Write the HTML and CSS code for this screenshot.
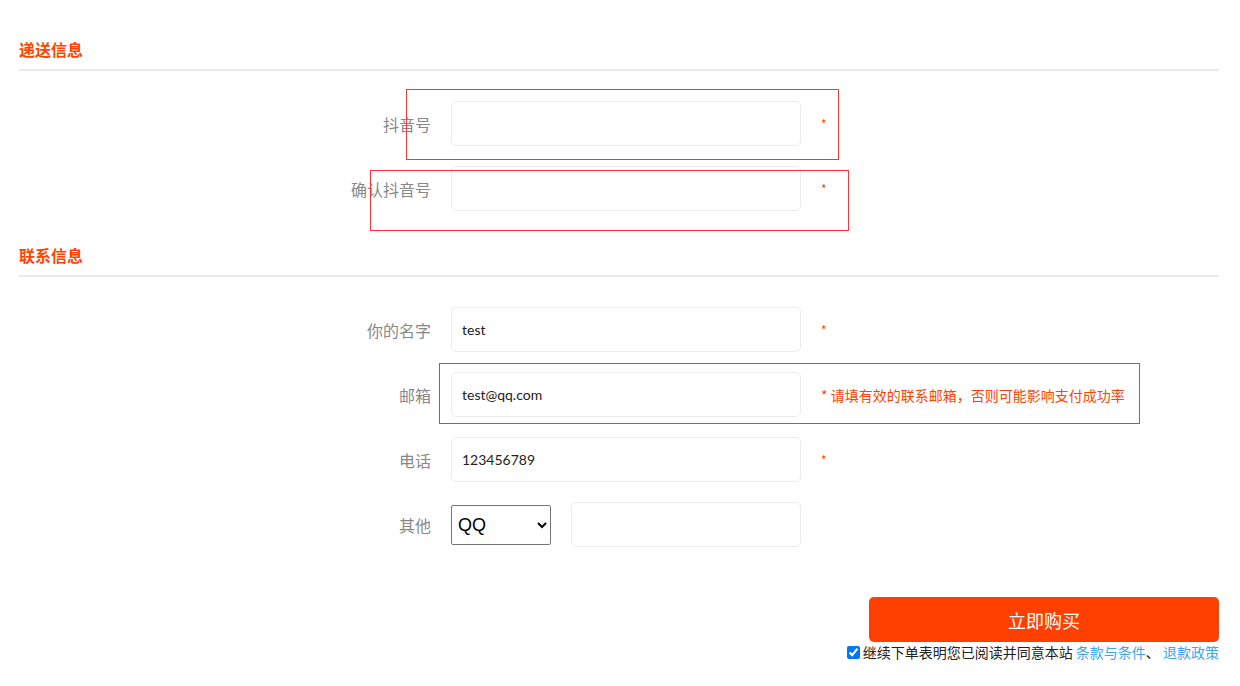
FILE: index.html
```html
<!DOCTYPE html>
<html lang="zh-CN">
<head>
    <meta charset="UTF-8">
    <meta name="viewport" content="width=device-width, initial-scale=1.0">
    <title>下单</title>
    <link rel="stylesheet" href="styles.css">
</head>
<body>
    <div class="container">
        <h2 class="section-title first">递送信息</h2>
        <div class="form-block">
            <div class="form-row">
                <span class="mark mark-1"></span>
                <label class="label">抖音号</label>
                <input class="field" type="text">
                <span class="req">*</span>
            </div>
            <div class="form-row">
                <span class="mark mark-2"></span>
                <label class="label">确认抖音号</label>
                <input class="field" type="text">
                <span class="req">*</span>
            </div>
        </div>

        <h2 class="section-title">联系信息</h2>
        <div class="form-block">
            <div class="form-row">
                <label class="label">你的名字</label>
                <input class="field" type="text" value="test">
                <span class="req">*</span>
            </div>
            <div class="form-row">
                <span class="mark mark-3"></span>
                <label class="label">邮箱</label>
                <input class="field" type="text" value="test@qq.com">
                <span class="req note">* 请填有效的联系邮箱，否则可能影响支付成功率</span>
            </div>
            <div class="form-row">
                <label class="label">电话</label>
                <input class="field" type="text" value="123456789">
                <span class="req">*</span>
            </div>
            <div class="form-row">
                <label class="label">其他</label>
                <select class="picker">
                    <option>QQ</option>
                    <option>微信</option>
                </select>
                <input class="field small" type="text">
            </div>
        </div>

        <div class="submit">
            <button class="buy-btn">立即购买</button>
            <div class="agree">
                <input type="checkbox" checked>
                <span>继续下单表明您已阅读并同意本站 <a href="#">条款与条件</a>、 <a href="#">退款政策</a></span>
            </div>
        </div>
    </div>
</body>
</html>
```

FILE: styles.css
```css
body { margin: 0; font-family: "Noto Sans CJK SC", "Liberation Sans", sans-serif; background: #fff; color: #333; }
.container { width: 1200px; margin: 0 19px; }

.section-title { margin: 34px 0 0; padding: 0 0 10px; font-size: 16px; line-height: 20px; font-weight: bold; color: #ff4400; border-bottom: 2px solid #ebebeb; }
.section-title.first { margin-top: 39px; }

.form-block { padding-top: 30px; }
.form-row { position: relative; display: flex; align-items: center; height: 45px; margin-bottom: 20px; }
.label { width: 432px; padding-right: 20px; box-sizing: border-box; text-align: right; font-size: 16px; color: #888; }
.field { width: 350px; height: 45px; box-sizing: border-box; border: 1px solid #ececec; border-radius: 5px; padding: 0 10px; font-family: Lato, "Noto Sans CJK SC", sans-serif; font-size: 14px; color: #222; outline: none; }
.field.small { width: 230px; margin-left: 20px; }
.picker { width: 100px; height: 40px; font-family: "Liberation Sans", sans-serif; font-size: 18px; color: #000; border: 1px solid #767676; border-radius: 2px; background: #fff; padding: 0 2px; }
.req { margin-left: 20px; font-size: 12px; color: #ff4400; }
.req.note { font-size: 14px; }

/* red check outlines */
.mark { position: absolute; border: 1px solid #f33; pointer-events: none; }
.mark-1 { left: 387px; top: -12px; width: 431px; height: 69px; }
.mark-2 { left: 351px; top: 4px; width: 477px; height: 59px; }
.mark-3 { left: 420px; top: -9px; width: 699px; height: 59px; }

.submit { display: flex; flex-direction: column; align-items: flex-end; margin-top: 50px; }
.buy-btn { width: 350px; height: 45px; border: none; border-radius: 5px; background: #ff4000; color: #fff; font-family: "Noto Sans CJK SC", sans-serif; font-size: 18px; cursor: pointer; }
.agree { display: flex; align-items: center; margin-top: 0; font-size: 14px; line-height: 20px; color: #222; }
.agree input { width: 13px; height: 13px; margin: 0 3px 0 0; }
.agree a { color: #3ba6e8; text-decoration: none; }
```
